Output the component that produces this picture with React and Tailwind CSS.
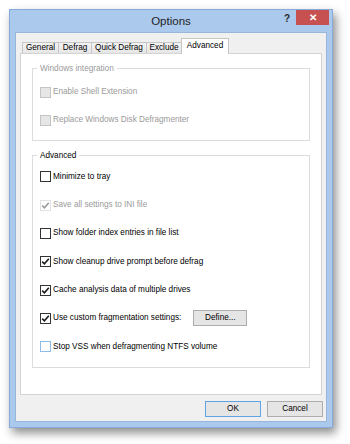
import React from 'react'

const font = { fontFamily: '"Liberation Sans", Arial, sans-serif' }

const tabs = [
  { label: 'General', w: 'w-[37px]' },
  { label: 'Defrag', w: 'w-[34px]' },
  { label: 'Quick Defrag', w: 'w-[56px]' },
  { label: 'Exclude', w: 'w-[36px]' },
]

const Check = ({ color }) => (
  <svg viewBox="0 0 9 9" className="w-[9px] h-[9px]">
    <path d="M1.2 4.6 L3.4 6.8 L7.8 1.8" stroke={color} strokeWidth="1.6" fill="none" />
  </svg>
)

const Box = ({ checked, disabled, focus }) => {
  let cls = 'border-[#333333] bg-white'
  if (disabled && checked) cls = 'border-[#e2e2e2] bg-white'
  else if (disabled) cls = 'border-[#c4c4c4] bg-[#e6e6e6]'
  else if (focus) cls = 'border-[#8fbbe8] bg-white'
  return (
    <span className={`w-[11px] h-[11px] border flex items-center justify-center shrink-0 ${cls}`}>
      {checked && <Check color={disabled ? '#9a9a9a' : '#1a1a1a'} />}
    </span>
  )
}

const Row = ({ label, checked, disabled, focus, children }) => (
  <div className="h-[28.33px] flex items-center pl-[7px]">
    <Box checked={checked} disabled={disabled} focus={focus} />
    <span className={`ml-[2px] ${disabled ? 'text-[#9a9a9a]' : 'text-black'}`}>{label}</span>
    {children}
  </div>
)

const Group = ({ title, disabled, className, children }) => (
  <div className={`relative border border-[#dcdcdc] mx-[11px] ${className}`}>
    <span
      className={`absolute left-[4px] top-0 -translate-y-1/2 bg-white px-[3px] leading-none ${
        disabled ? 'text-[#9a9a9a]' : 'text-black'
      }`}
    >
      {title}
    </span>
    {children}
  </div>
)

const Button = ({ children, focus, className = '' }) => (
  <div
    className={`h-[16px] flex items-center justify-center bg-[#e5e5e5] border ${
      focus ? 'border-[#5fa3e6]' : 'border-[#adadad]'
    } text-black ${className}`}
  >
    {children}
  </div>
)

const TitleBar = () => (
  <div className="h-[22px] flex items-start">
    <div className="w-[50px]" />
    <div className="flex-1 text-center text-[11.5px] text-[#1e1e1e] leading-[22px]">Options</div>
    <div className="w-[50px] flex items-start justify-end">
      <span className="text-[10px] font-bold text-[#2a2a2a] leading-[15px] mr-[6px] mt-[1px]">?</span>
      <div className="w-[33px] h-[15px] bg-[#c75050] flex items-center justify-center mr-[3px]">
        <span className="text-white text-[10px] font-bold leading-none">✕</span>
      </div>
    </div>
  </div>
)

const Tabs = () => (
  <div className="pt-[5px] pl-[6px] h-[20px] flex items-end relative z-10">
    {tabs.map(t => (
      <div
        key={t.label}
        className={`${t.w} h-[11px] -mr-px border border-b-0 border-[#c6c6c6] bg-gradient-to-b from-[#f3f3f3] to-[#e6e6e6] flex items-center justify-center text-black leading-none`}
      >
        {t.label}
      </div>
    ))}
    <div className="w-[48px] h-[16px] -mb-px border border-b-0 border-[#c6c6c6] bg-white flex items-start justify-center pt-[3px] text-black leading-none">
      Advanced
    </div>
  </div>
)

export default function App() {
  return (
    <div className="w-[350px] h-[444px] bg-white pt-[9px] pl-[9px] text-[8.2px]" style={font}>
      <div className="w-[324px] h-[419px] bg-[#abc9ec] border border-[#86abd9] shadow-[3px_5px_9px_rgba(0,0,0,0.45)] flex flex-col">
        <TitleBar />
        <div className="mx-[5px] mb-[5px] flex-1 bg-[#f0f0f0] border border-[#98b6dc] flex flex-col">
          <Tabs />
          <div className="mx-[4px] h-[342px] bg-white border border-[#d4d4d4] pt-[14px]">
            <Group title="Windows integration" disabled className="pt-[9px] pb-[5px]">
              <Row label="Enable Shell Extension" disabled />
              <Row label="Replace Windows Disk Defragmenter" disabled />
            </Group>
            <Group title="Advanced" className="mt-[14px] pt-[7px] pb-[6px]">
              <Row label="Minimize to tray" />
              <Row label="Save all settings to INI file" checked disabled />
              <Row label="Show folder index entries in file list" />
              <Row label="Show cleanup drive prompt before defrag" checked />
              <Row label="Cache analysis data of multiple drives" checked />
              <Row label="Use custom fragmentation settings:" checked>
                <Button className="w-[54px] ml-[12px]">Define...</Button>
              </Row>
              <Row label="Stop VSS when defragmenting NTFS volume" focus />
            </Group>
          </div>
          <div className="flex justify-end gap-[6px] mt-[6px] mr-[3px]">
            <Button focus className="w-[56px]">OK</Button>
            <Button className="w-[56px]">Cancel</Button>
          </div>
        </div>
      </div>
    </div>
  )
}
